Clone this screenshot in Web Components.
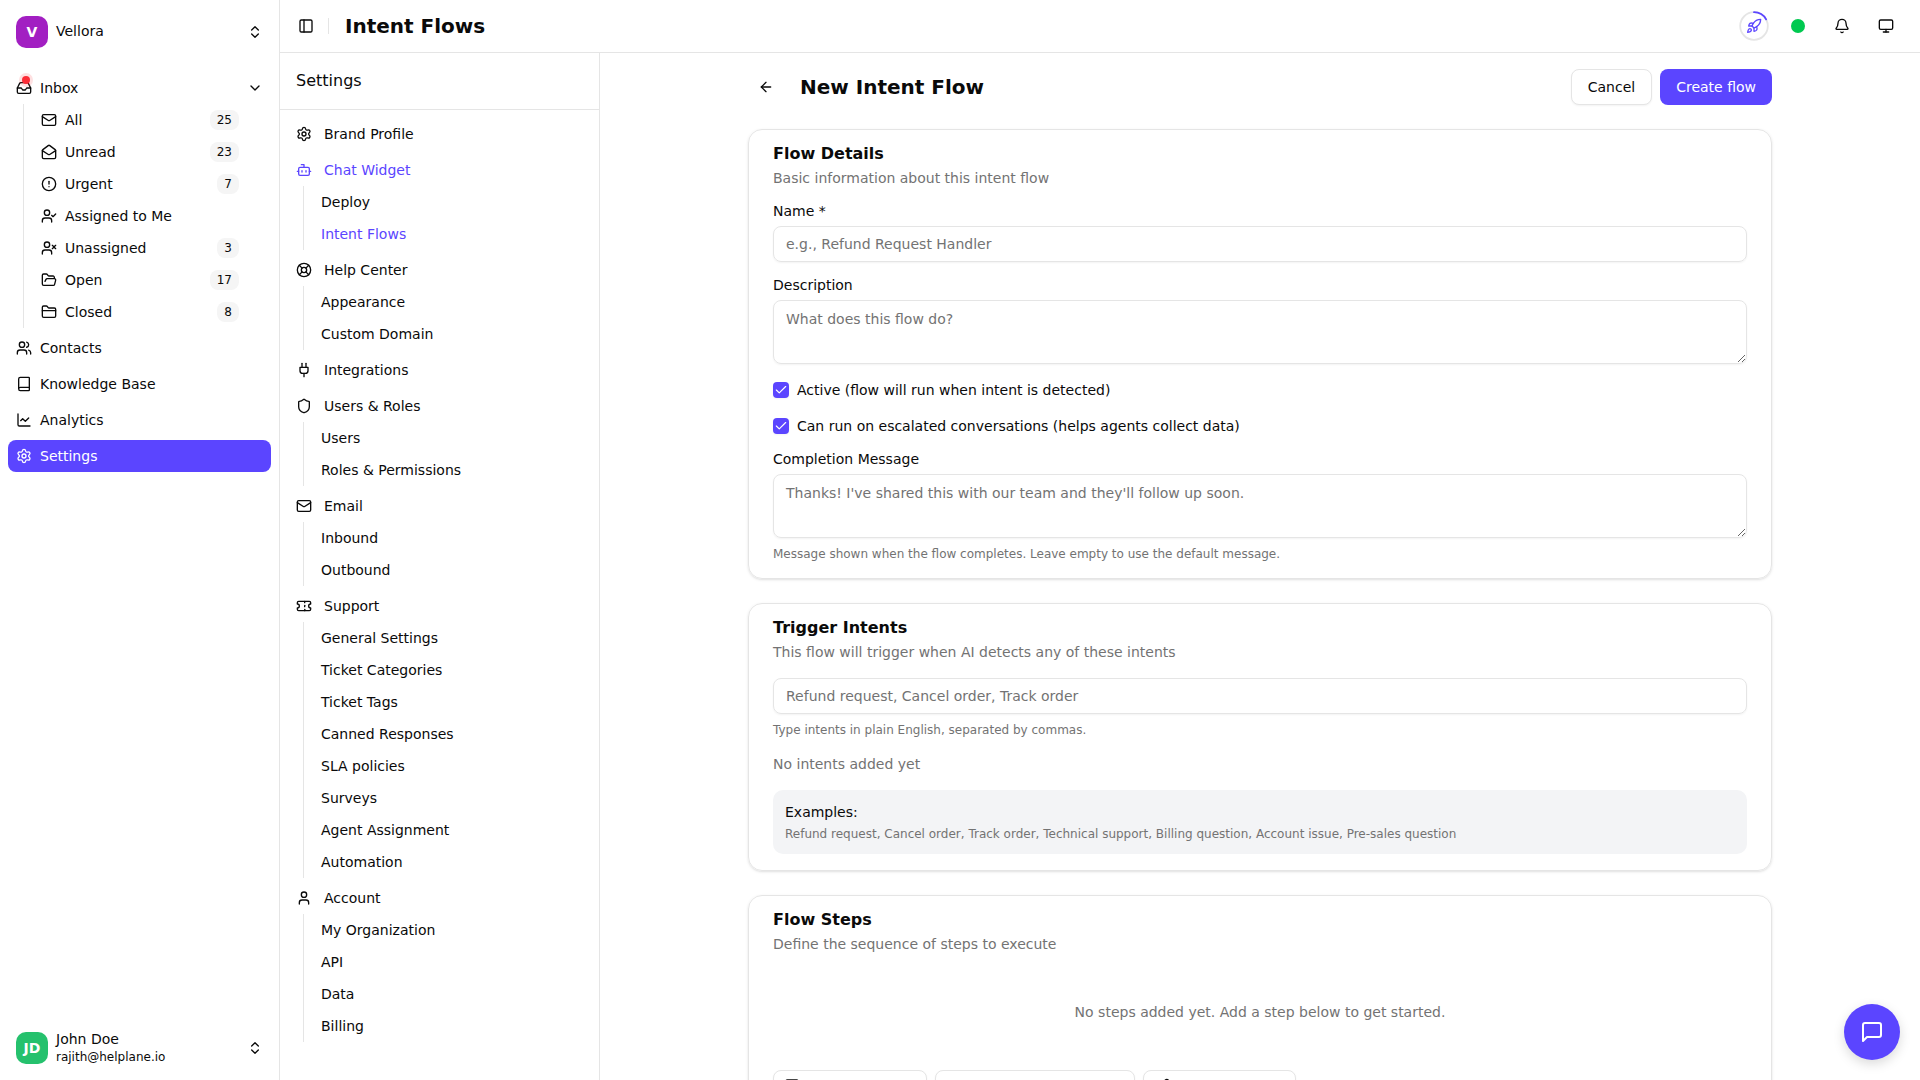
<!DOCTYPE html>
<html lang="en">
<head>
<meta charset="utf-8">
<title>Intent Flows</title>
<style>
    html, body {
        height: 100%;
    }

    body {
        margin: 0;
        overflow: hidden;
        background: #fff;
        color: #0a0a0a;
        font-family: "DejaVu Sans", sans-serif;
        font-size: 14px;
        line-height: 20px;

        --primary: #5b45ff;
        --border: #e5e5e5;
        --muted: #737373;
    }
</style>
</head>
<body>
<app-shell></app-shell>

<script>
const ICONS = {
    inbox: '<polyline points="22 12 16 12 14 15 10 15 8 12 2 12"/><path d="M5.45 5.11 2 12v6a2 2 0 0 0 2 2h16a2 2 0 0 0 2-2v-6l-3.45-6.89A2 2 0 0 0 16.76 4H7.24a2 2 0 0 0-1.79 1.11z"/>',
    mail: '<path d="m22 7-8.991 5.727a2 2 0 0 1-2.009 0L2 7"/><rect x="2" y="4" width="20" height="16" rx="2"/>',
    mailOpen: '<path d="M21.2 8.4c.5.38.8.97.8 1.6v10a2 2 0 0 1-2 2H4a2 2 0 0 1-2-2V10a2 2 0 0 1 .8-1.6l8-6a2 2 0 0 1 2.4 0l8 6Z"/><path d="m22 10-8.97 5.7a1.94 1.94 0 0 1-2.06 0L2 10"/>',
    alert: '<circle cx="12" cy="12" r="10"/><line x1="12" x2="12" y1="8" y2="12"/><line x1="12" x2="12.01" y1="16" y2="16"/>',
    userCheck: '<path d="m16 11 2 2 4-4"/><path d="M16 21v-2a4 4 0 0 0-4-4H6a4 4 0 0 0-4 4v2"/><circle cx="9" cy="7" r="4"/>',
    userX: '<path d="M16 21v-2a4 4 0 0 0-4-4H6a4 4 0 0 0-4 4v2"/><circle cx="9" cy="7" r="4"/><line x1="17" x2="22" y1="8" y2="13"/><line x1="22" x2="17" y1="8" y2="13"/>',
    folderOpen: '<path d="m6 14 1.5-2.9A2 2 0 0 1 9.24 10H20a2 2 0 0 1 1.94 2.5l-1.54 6a2 2 0 0 1-1.95 1.5H4a2 2 0 0 1-2-2V5a2 2 0 0 1 2-2h3.9a2 2 0 0 1 1.69.9l.81 1.2a2 2 0 0 0 1.67.9H18a2 2 0 0 1 2 2v2"/>',
    folder: '<path d="M20 20a2 2 0 0 0 2-2V8a2 2 0 0 0-2-2h-7.9a2 2 0 0 1-1.69-.9L9.6 3.9A2 2 0 0 0 7.93 3H4a2 2 0 0 0-2 2v13a2 2 0 0 0 2 2Z"/><path d="M2 10h20"/>',
    users: '<path d="M16 21v-2a4 4 0 0 0-4-4H6a4 4 0 0 0-4 4v2"/><path d="M16 3.128a4 4 0 0 1 0 7.744"/><path d="M22 21v-2a4 4 0 0 0-3-3.87"/><circle cx="9" cy="7" r="4"/>',
    book: '<path d="M4 19.5v-15A2.5 2.5 0 0 1 6.5 2H19a1 1 0 0 1 1 1v18a1 1 0 0 1-1 1H6.5a1 1 0 0 1 0-5H20"/>',
    chart: '<path d="M3 3v16a2 2 0 0 0 2 2h16"/><path d="m19 9-5 5-4-4-3 3"/>',
    settings: '<path d="M9.671 4.136a2.34 2.34 0 0 1 4.659 0 2.34 2.34 0 0 0 3.319 1.915 2.34 2.34 0 0 1 2.33 4.033 2.34 2.34 0 0 0 0 3.831 2.34 2.34 0 0 1-2.33 4.033 2.34 2.34 0 0 0-3.319 1.915 2.34 2.34 0 0 1-4.659 0 2.34 2.34 0 0 0-3.32-1.915 2.34 2.34 0 0 1-2.33-4.033 2.34 2.34 0 0 0 0-3.831A2.34 2.34 0 0 1 6.35 6.051a2.34 2.34 0 0 0 3.319-1.915"/><circle cx="12" cy="12" r="3"/>',
    bot: '<path d="M12 8V4H8"/><rect width="16" height="12" x="4" y="8" rx="2"/><path d="M2 14h2"/><path d="M20 14h2"/><path d="M15 13v2"/><path d="M9 13v2"/>',
    lifebuoy: '<circle cx="12" cy="12" r="10"/><path d="m4.93 4.93 4.24 4.24"/><path d="m14.83 9.17 4.24-4.24"/><path d="m14.83 14.83 4.24 4.24"/><path d="m9.17 14.83-4.24 4.24"/><circle cx="12" cy="12" r="4"/>',
    plug: '<path d="M12 22v-5"/><path d="M9 8V2"/><path d="M15 8V2"/><path d="M18 8v5a4 4 0 0 1-4 4h-4a4 4 0 0 1-4-4V8Z"/>',
    shield: '<path d="M20 13c0 5-3.5 7.5-7.66 8.95a1 1 0 0 1-.67-.01C7.5 20.5 4 18 4 13V6a1 1 0 0 1 1-1c2 0 4.5-1.2 6.24-2.72a1.17 1.17 0 0 1 1.52 0C14.51 3.81 17 5 19 5a1 1 0 0 1 1 1z"/>',
    ticket: '<path d="M2 9a3 3 0 0 1 0 6v2a2 2 0 0 0 2 2h16a2 2 0 0 0 2-2v-2a3 3 0 0 1 0-6V7a2 2 0 0 0-2-2H4a2 2 0 0 0-2 2Z"/><path d="M13 5v2"/><path d="M13 17v2"/><path d="M13 11v2"/>',
    user: '<path d="M19 21v-2a4 4 0 0 0-4-4H9a4 4 0 0 0-4 4v2"/><circle cx="12" cy="7" r="4"/>',
    chevrons: '<path d="m7 15 5 5 5-5"/><path d="m7 9 5-5 5 5"/>',
    chevron: '<path d="m6 9 6 6 6-6"/>',
    panel: '<rect width="18" height="18" x="3" y="3" rx="2"/><path d="M9 3v18"/>',
    rocket: '<path d="M4.5 16.5c-1.5 1.26-2 5-2 5s3.74-.5 5-2c.71-.84.7-2.13-.09-2.91a2.18 2.18 0 0 0-2.91-.09z"/><path d="m12 15-3-3a22 22 0 0 1 2-3.95A12.88 12.88 0 0 1 22 2c0 2.72-.78 7.5-6 11a22.35 22.35 0 0 1-4 2z"/><path d="M9 12H4s.55-3.03 2-4c1.62-1.08 5 0 5 0"/><path d="M12 15v5s3.03-.55 4-2c1.08-1.62 0-5 0-5"/>',
    bell: '<path d="M10.268 21a2 2 0 0 0 3.464 0"/><path d="M3.262 15.326A1 1 0 0 0 4 17h16a1 1 0 0 0 .74-1.673C19.41 13.956 18 12.499 18 8A6 6 0 0 0 6 8c0 4.499-1.411 5.956-2.738 7.326"/>',
    monitor: '<rect width="20" height="14" x="2" y="3" rx="2"/><line x1="8" x2="16" y1="21" y2="21"/><line x1="12" x2="12" y1="17" y2="21"/>',
    arrowLeft: '<path d="m12 19-7-7 7-7"/><path d="M19 12H5"/>',
    check: '<path d="M20 6 9 17l-5-5"/>',
    message: '<path d="M21 15a2 2 0 0 1-2 2H7l-4 4V5a2 2 0 0 1 2-2h14a2 2 0 0 1 2 2z"/>',
    form: '<rect x="3" y="3" width="18" height="18" rx="2"/><path d="M7 9h10"/><path d="M7 14h6"/>',
    list: '<path d="M3 6h.01"/><path d="M3 12h.01"/><path d="M3 18h.01"/><path d="M8 6h13"/><path d="M8 12h13"/><path d="M8 18h13"/>',
    pencil: '<path d="M21.174 6.812a1 1 0 0 0-3.986-3.987L3.842 16.174a2 2 0 0 0-.5.83l-1.321 4.352a.5.5 0 0 0 .623.622l4.353-1.32a2 2 0 0 0 .83-.497z"/><path d="m15 5 4 4"/>',
};

class BaseElement extends HTMLElement {
    constructor() {
        super();
        this.attachShadow({ mode: 'open' });
    }

    connectedCallback() {
        const template = document.createElement('template');
        template.innerHTML = `<style>${this.constructor.style}</style>${this.html}`;
        this.shadowRoot.innerHTML = '';
        this.shadowRoot.appendChild(template.content.cloneNode(true));
    }

    attr(name, fallback = '') {
        return this.getAttribute(name) || fallback;
    }
}

class UiIcon extends BaseElement {
    static get style() {
        return `
            :host { display: block; flex: none; width: 16px; height: 16px; }
            svg { display: block; width: 100%; height: 100%; }
        `;
    }

    get html() {
        return `<svg viewBox="0 0 24 24" fill="none" stroke="currentColor" stroke-linecap="round"
            stroke-linejoin="round" stroke-width="2">${ICONS[this.attr('name')]}</svg>`;
    }
}

class AccountSwitch extends BaseElement {
    static get style() {
        return `
            :host { display: flex; align-items: center; gap: 8px; height: 32px; padding: 8px; }
            .avatar {
                width: 32px; height: 32px; border-radius: 10px; flex: none;
                display: grid; place-items: center;
                background: var(--avatar); color: #fff; font-weight: bold;
            }
            .text { flex: 1; }
            .name { line-height: 17.5px; }
            .mail { font-size: 12px; line-height: 16px; }
        `;
    }

    get html() {
        const mail = this.attr('mail');
        return `
            <div class="avatar">${this.attr('initials')}</div>
            <div class="text">
                <div class="name">${this.attr('name')}</div>
                ${mail ? `<div class="mail">${mail}</div>` : ''}
            </div>
            <ui-icon name="chevrons"></ui-icon>
        `;
    }
}

class NavItem extends BaseElement {
    static get style() {
        return `
            :host {
                display: flex; align-items: center; gap: 8px; box-sizing: border-box;
                height: 32px; padding: 0 8px; border-radius: 8px;
            }
            :host([active]) { background: var(--primary); color: #fff; }
            .icon { position: relative; }
            .label { flex: 1; white-space: nowrap; }
            .badge {
                height: 20px; padding: 0 7px; border-radius: 8px;
                background: #f5f5f5; font-size: 12px;
            }
            .dot {
                position: absolute; left: 6px; top: -4px; width: 8px; height: 8px;
                border-radius: 50%; background: #fb2c36;
                box-shadow: 0 0 0 3px #fb2c3626;
            }
        `;
    }

    get html() {
        const count = this.attr('count');
        return `
            <div class="icon">
                <ui-icon name="${this.attr('icon')}"></ui-icon>
                ${this.hasAttribute('alert') ? '<span class="dot"></span>' : ''}
            </div>
            <span class="label"><slot></slot></span>
            ${count ? `<span class="badge">${count}</span>` : ''}
            ${this.hasAttribute('expanded') ? '<ui-icon name="chevron"></ui-icon>' : ''}
        `;
    }
}

class AppSidebar extends BaseElement {
    static get style() {
        return `
            :host {
                display: flex; flex-direction: column; box-sizing: border-box;
                border-right: 1px solid var(--border);
            }
            header, footer { padding: 8px; }
            nav { flex: 1; display: flex; flex-direction: column; gap: 4px; padding: 8px; }
            .sub { margin: 0 24px 0 15px; padding-left: 9px; border-left: 1px solid var(--border); }
            .vellora { --avatar: #a21fc2; }
            .john { --avatar: #25c16d; }
        `;
    }

    get html() {
        return `
            <header><account-switch class="vellora" initials="V" name="Vellora"></account-switch></header>
            <nav>
                <div>
                    <nav-item icon="inbox" alert expanded>Inbox</nav-item>
                    <div class="sub">
                        <nav-item icon="mail" count="25">All</nav-item>
                        <nav-item icon="mailOpen" count="23">Unread</nav-item>
                        <nav-item icon="alert" count="7">Urgent</nav-item>
                        <nav-item icon="userCheck">Assigned to Me</nav-item>
                        <nav-item icon="userX" count="3">Unassigned</nav-item>
                        <nav-item icon="folderOpen" count="17">Open</nav-item>
                        <nav-item icon="folder" count="8">Closed</nav-item>
                    </div>
                </div>
                <nav-item icon="users">Contacts</nav-item>
                <nav-item icon="book">Knowledge Base</nav-item>
                <nav-item icon="chart">Analytics</nav-item>
                <nav-item icon="settings" active>Settings</nav-item>
            </nav>
            <footer><account-switch class="john" initials="JD" name="John Doe" mail="rajith@helplane.io"></account-switch></footer>
        `;
    }
}

class AppHeader extends BaseElement {
    static get style() {
        return `
            :host {
                display: flex; align-items: center; box-sizing: border-box; height: 53px;
                padding: 0 18px; border-bottom: 1px solid var(--border);
            }
            .line { width: 1px; height: 16px; margin: 0 16px 0 14px; background: var(--border); }
            h1 { flex: 1; margin: 0; font-size: 20px; line-height: 28px; }
            .tools { display: grid; grid-template-columns: repeat(4, 32px); gap: 12px; place-items: center; }
            .ring { display: grid; place-items: center; color: var(--primary); }
            .ring > * { grid-area: 1 / 1; }
            .online { width: 14px; height: 14px; border-radius: 50%; background: #00c950; }
        `;
    }

    get html() {
        return `
            <ui-icon name="panel"></ui-icon>
            <div class="line"></div>
            <h1><slot></slot></h1>
            <div class="tools">
                <div class="ring">
                    <svg width="32" height="32" viewBox="0 0 32 32" fill="none" stroke-width="1.8">
                        <circle cx="16" cy="16" r="13.8" stroke="#e5e5e5"/>
                        <circle cx="16" cy="16" r="13.8" stroke="currentColor" stroke-linecap="round"
                            pathLength="100" stroke-dasharray="17 100" transform="rotate(-90 16 16)"/>
                    </svg>
                    <ui-icon name="rocket"></ui-icon>
                </div>
                <div class="online"></div>
                <ui-icon name="bell"></ui-icon>
                <ui-icon name="monitor"></ui-icon>
            </div>
        `;
    }
}

class SettingsGroup extends BaseElement {
    static get style() {
        return `
            :host { display: block; }
            .head { display: flex; align-items: center; gap: 12px; height: 32px; padding: 0 8px; }
            .sub { margin-left: 15px; padding-left: 17px; border-left: 1px solid var(--border); }
            .sub div { height: 32px; line-height: 32px; }
            :host([active]) .head, .sub .current { color: var(--primary); }
        `;
    }

    get html() {
        const items = this.attr('items').split(',').filter(Boolean);
        const current = this.attr('current');
        return `
            <div class="head"><ui-icon name="${this.attr('icon')}"></ui-icon><slot></slot></div>
            ${items.length ? `<div class="sub">${items.map(item =>
                `<div${item === current ? ' class="current"' : ''}>${item}</div>`).join('')}</div>` : ''}
        `;
    }
}

class SettingsNav extends BaseElement {
    static get style() {
        return `
            :host { display: block; box-sizing: border-box; border-right: 1px solid var(--border); }
            header {
                height: 56px; padding: 0 16px; line-height: 55px; font-size: 16px;
                border-bottom: 1px solid var(--border);
            }
            nav { display: flex; flex-direction: column; gap: 4px; padding: 8px; }
        `;
    }

    get html() {
        return `
            <header>Settings</header>
            <nav>
                <settings-group icon="settings">Brand Profile</settings-group>
                <settings-group icon="bot" active items="Deploy,Intent Flows" current="Intent Flows">Chat Widget</settings-group>
                <settings-group icon="lifebuoy" items="Appearance,Custom Domain">Help Center</settings-group>
                <settings-group icon="plug">Integrations</settings-group>
                <settings-group icon="shield" items="Users,Roles &amp; Permissions">Users &amp; Roles</settings-group>
                <settings-group icon="mail" items="Inbound,Outbound">Email</settings-group>
                <settings-group icon="ticket" items="General Settings,Ticket Categories,Ticket Tags,Canned Responses,SLA policies,Surveys,Agent Assignment,Automation">Support</settings-group>
                <settings-group icon="user" items="My Organization,API,Data,Billing">Account</settings-group>
            </nav>
        `;
    }
}

class UiButton extends BaseElement {
    static get style() {
        return `
            :host {
                display: flex; align-items: center; gap: 8px; box-sizing: border-box; height: 36px;
                padding: 0 16px; border: 1px solid var(--border); border-radius: 8px;
                white-space: nowrap; background: #fff; box-shadow: 0 1px 2px #0000000d;
            }
            :host([primary]) { border: 0; background: var(--primary); color: #fff; box-shadow: none; }
            :host([step]) { height: 32px; padding: 0 10px; gap: 6px; }
        `;
    }

    get html() {
        const icon = this.attr('icon');
        return `${icon ? `<ui-icon name="${icon}"></ui-icon>` : ''}<slot></slot>`;
    }
}

class FlowCard extends BaseElement {
    static get style() {
        return `
            :host {
                display: block; box-sizing: border-box; padding: 16px 24px;
                border: 1px solid var(--border); border-radius: 14px;
                box-shadow: 0 1px 3px #0000001a, 0 1px 2px -1px #0000001a;
            }
            h2 { margin: 0; font-size: 16px; line-height: 16px; }
            p { margin: 6px 0 0; color: var(--muted); }
        `;
    }

    get html() {
        return `<h2>${this.attr('heading')}</h2><p>${this.attr('note')}</p><slot></slot>`;
    }
}

class FormField extends BaseElement {
    static get style() {
        return `
            :host { display: flex; flex-direction: column; }
            label { line-height: 14px; margin-bottom: 8px; }
            input, textarea {
                display: block; box-sizing: border-box; width: 100%; height: 36px; margin: 0;
                padding: 4px 12px; border: 1px solid var(--border); border-radius: 8px;
                font: inherit; color: inherit; background: transparent; outline: none;
                box-shadow: 0 1px 2px #0000000d;
            }
            textarea { height: 64px; padding: 8px 12px; resize: vertical; }
            ::placeholder { color: var(--muted); opacity: 1; }
            .hint { margin-top: 8px; font-size: 12px; line-height: 16px; color: var(--muted); }
        `;
    }

    get html() {
        const label = this.attr('label');
        const hint = this.attr('hint');
        const placeholder = this.attr('placeholder');
        return `
            ${label ? `<label>${label}</label>` : ''}
            ${this.hasAttribute('multiline')
                ? `<textarea placeholder="${placeholder}"></textarea>`
                : `<input type="text" placeholder="${placeholder}">`}
            ${hint ? `<div class="hint">${hint}</div>` : ''}
        `;
    }
}

class CheckField extends BaseElement {
    static get style() {
        return `
            :host { display: flex; align-items: center; gap: 8px; height: 20px; }
            .box {
                display: grid; place-items: center; width: 16px; height: 16px;
                border-radius: 4px; background: var(--primary); color: #fff;
                box-shadow: 0 1px 2px #0000000d;
            }
            ui-icon { width: 14px; height: 14px; }
        `;
    }

    get html() {
        return `<span class="box"><ui-icon name="check"></ui-icon></span><slot></slot>`;
    }
}

class FlowForm extends BaseElement {
    static get style() {
        return `
            :host { display: flex; flex-direction: column; gap: 24px; width: 1024px; margin: 0 auto; padding-top: 16px; }
            header { display: flex; align-items: center; gap: 8px; height: 36px; }
            header ui-icon { margin: 0 18px 0 10px; }
            h1 { flex: 1; margin: 0; font-size: 20px; line-height: 28px; }
            flow-card:nth-of-type(1) { height: 450px; }
            flow-card:nth-of-type(2) { height: 268px; }
            .fields { display: flex; flex-direction: column; gap: 16px; margin-top: 16px; }
            .triggers { margin-top: 16px; }
            .none { margin: 16px 0; color: var(--muted); }
            .examples {
                display: flex; flex-direction: column; gap: 4px; box-sizing: border-box; height: 64px;
                padding: 12px; border-radius: 10px; background: #f3f4f6;
            }
            .examples small { font-size: 12px; line-height: 16px; color: var(--muted); }
            .empty { padding: 48px 0; text-align: center; color: var(--muted); }
            .steps { display: flex; gap: 8px; }
        `;
    }

    get html() {
        return `
            <header>
                <ui-icon name="arrowLeft"></ui-icon>
                <h1>New Intent Flow</h1>
                <ui-button>Cancel</ui-button>
                <ui-button primary>Create flow</ui-button>
            </header>
            <flow-card heading="Flow Details" note="Basic information about this intent flow">
                <div class="fields">
                    <form-field label="Name *" placeholder="e.g., Refund Request Handler"></form-field>
                    <form-field label="Description" placeholder="What does this flow do?" multiline></form-field>
                    <check-field>Active (flow will run when intent is detected)</check-field>
                    <check-field>Can run on escalated conversations (helps agents collect data)</check-field>
                    <form-field label="Completion Message" multiline
                        placeholder="Thanks! I've shared this with our team and they'll follow up soon."
                        hint="Message shown when the flow completes. Leave empty to use the default message."></form-field>
                </div>
            </flow-card>
            <flow-card heading="Trigger Intents" note="This flow will trigger when AI detects any of these intents">
                <form-field class="triggers" placeholder="Refund request, Cancel order, Track order"
                    hint="Type intents in plain English, separated by commas."></form-field>
                <div class="none">No intents added yet</div>
                <div class="examples">
                    <span>Examples:</span>
                    <small>Refund request, Cancel order, Track order, Technical support, Billing question, Account issue, Pre-sales question</small>
                </div>
            </flow-card>
            <flow-card heading="Flow Steps" note="Define the sequence of steps to execute">
                <div class="empty">No steps added yet. Add a step below to get started.</div>
                <div class="steps">
                    <ui-button step icon="form" style="width: 154px"></ui-button>
                    <ui-button step icon="list" style="width: 200px"></ui-button>
                    <ui-button step icon="pencil" style="width: 153px"></ui-button>
                </div>
            </flow-card>
        `;
    }
}

class ChatLauncher extends BaseElement {
    static get style() {
        return `
            :host {
                position: fixed; right: 20px; bottom: 20px; width: 56px; height: 56px;
                display: grid; place-items: center; border-radius: 50%;
                background: var(--primary); color: #fff; box-shadow: 0 4px 12px #00000026;
            }
            ui-icon { width: 24px; height: 24px; }
        `;
    }

    get html() {
        return `<ui-icon name="message"></ui-icon>`;
    }
}

class AppShell extends BaseElement {
    static get style() {
        return `
            :host {
                display: grid; grid-template: 53px minmax(0, 1fr) / 280px 320px minmax(0, 1fr);
                height: 100vh; overflow: hidden;
            }
            app-sidebar { grid-row: 1 / 3; }
            app-header { grid-column: 2 / 4; }
            main { overflow: hidden; }
        `;
    }

    get html() {
        return `
            <app-sidebar></app-sidebar>
            <app-header>Intent Flows</app-header>
            <settings-nav></settings-nav>
            <main><flow-form></flow-form></main>
            <chat-launcher></chat-launcher>
        `;
    }
}

customElements.define('ui-icon', UiIcon);
customElements.define('account-switch', AccountSwitch);
customElements.define('nav-item', NavItem);
customElements.define('app-sidebar', AppSidebar);
customElements.define('app-header', AppHeader);
customElements.define('settings-group', SettingsGroup);
customElements.define('settings-nav', SettingsNav);
customElements.define('ui-button', UiButton);
customElements.define('flow-card', FlowCard);
customElements.define('form-field', FormField);
customElements.define('check-field', CheckField);
customElements.define('flow-form', FlowForm);
customElements.define('chat-launcher', ChatLauncher);
customElements.define('app-shell', AppShell);
</script>
</body>
</html>
